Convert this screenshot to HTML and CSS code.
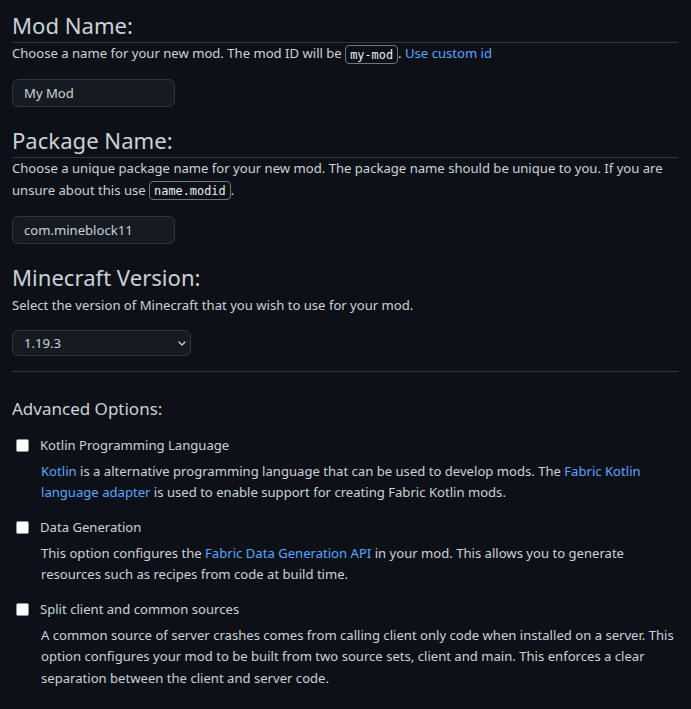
FILE: index.html
```html
<!DOCTYPE html>
<html lang="en">
<head>
<meta charset="utf-8">
<title>Mod Template Generator</title>
<link rel="stylesheet" href="styles.css">
</head>
<body>
<main class="page">
  <section class="field">
    <h2 class="field-title ruled">Mod Name:</h2>
    <p class="field-help">Choose a name for your new mod. The mod ID will be <code class="chip">my-mod</code>. <a class="link" href="#">Use custom id</a></p>
    <input class="text-input" type="text" value="My Mod">
  </section>

  <section class="field">
    <h2 class="field-title ruled">Package Name:</h2>
    <p class="field-help">Choose a unique package name for your new mod. The package name should be unique to you. If you are unsure about this use <code class="chip">name.modid</code>.</p>
    <input class="text-input" type="text" value="com.mineblock11">
  </section>

  <section class="field">
    <h2 class="field-title plain">Minecraft Version:</h2>
    <p class="field-help">Select the version of Minecraft that you wish to use for your mod.</p>
    <div class="select-wrap">
      <select class="select-input">
        <option>1.19.3</option>
      </select>
      <svg class="chevron" width="8" height="5" viewBox="0 0 8 5" aria-hidden="true"><path d="M1 1l3 3 3-3" fill="none" stroke="#c9d1d9" stroke-width="1.3" stroke-linecap="round" stroke-linejoin="round"/></svg>
    </div>
  </section>

  <hr class="divider">

  <h3 class="advanced-title">Advanced Options:</h3>

  <div class="options">
    <div class="option">
      <label class="option-row"><input class="check" type="checkbox"><span>Kotlin Programming Language</span></label>
      <p class="option-help"><a class="link" href="#">Kotlin</a> is a alternative programming language that can be used to develop mods. The <a class="link" href="#">Fabric Kotlin language adapter</a> is used to enable support for creating Fabric Kotlin mods.</p>
    </div>
    <div class="option">
      <label class="option-row"><input class="check" type="checkbox"><span>Data Generation</span></label>
      <p class="option-help">This option configures the <a class="link" href="#">Fabric Data Generation API</a> in your mod. This allows you to generate resources such as recipes from code at build time.</p>
    </div>
    <div class="option">
      <label class="option-row"><input class="check" type="checkbox"><span>Split client and common sources</span></label>
      <p class="option-help">A common source of server crashes comes from calling client only code when installed on a server. This option configures your mod to be built from two source sets, client and main. This enforces a clear separation between the client and server code.</p>
    </div>
  </div>
</main>
</body>
</html>
```
FILE: styles.css
```css
html, body {
  margin: 0;
  background: #0d1117;
}
body {
  color: #c9d1d9;
  font-family: "Noto Sans", sans-serif;
  font-size: 13.1px;
}
.page {
  padding: 10px 13px 0 12px;
}
.field + .field {
  margin-top: 18px;
}
.field-title {
  margin: 0;
  font-size: 22.1px;
  font-weight: 400;
  line-height: 30px;
  padding-bottom: 2px;
  border-bottom: 1px solid transparent;
  color: #c9d1d9;
}
.field-title.ruled {
  border-bottom-color: #30363d;
}
.field-help {
  margin: 0;
  line-height: 21.5px;
}
.chip {
  font-family: "DejaVu Sans Mono", monospace;
  font-size: 11.9px;
  line-height: 1;
  border: 1px solid #6e7681;
  border-radius: 4px;
  padding: 1.5px 4px;
  color: #e6edf3;
}
.link {
  color: #58a6ff;
  text-decoration: none;
}
.text-input {
  display: block;
  margin-top: 14.5px;
  box-sizing: border-box;
  width: 163px;
  height: 28px;
  padding: 0 11px;
  background: #161b22;
  border: 1px solid #30363d;
  border-radius: 6px;
  color: #c9d1d9;
  font-family: "Noto Sans", sans-serif;
  font-size: 13.1px;
  outline: none;
}
.select-wrap {
  position: relative;
  margin-top: 14px;
  width: 179px;
}
.select-input {
  display: block;
  box-sizing: border-box;
  width: 179px;
  height: 26px;
  padding: 0 11px;
  appearance: none;
  -webkit-appearance: none;
  background: #161b22;
  border: 1px solid #30363d;
  border-radius: 6px;
  color: #c9d1d9;
  font-family: "Noto Sans", sans-serif;
  font-size: 13.1px;
  outline: none;
}
.chevron {
  position: absolute;
  right: 5px;
  top: 11px;
}
.divider {
  margin: 15px 0 0;
  border: 0;
  border-top: 1px solid #30363d;
  height: 0;
}
.advanced-title {
  margin: 25px 0 0;
  font-size: 17px;
  font-weight: 400;
  line-height: 24px;
  color: #c9d1d9;
}
.options {
  margin-top: 14px;
}
.option + .option {
  margin-top: 13.5px;
}
.option-row {
  display: flex;
  align-items: center;
  gap: 11px;
  line-height: 21px;
}
.check {
  appearance: none;
  -webkit-appearance: none;
  box-sizing: border-box;
  width: 13px;
  height: 13px;
  margin: 0 0 0 4px;
  background: #ffffff;
  border: 1px solid #8b949e;
  border-radius: 2px;
  flex: none;
}
.option-help {
  margin: 4.5px 0 0 29px;
  line-height: 21.5px;
}
```
